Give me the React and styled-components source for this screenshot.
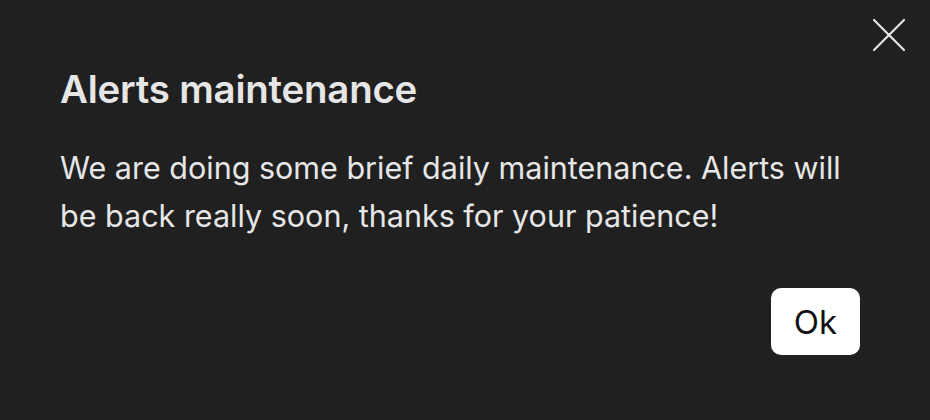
import React from "react";
import styled, { createGlobalStyle } from "styled-components";

const GlobalStyle = createGlobalStyle`
  html, body {
    margin: 0;
    padding: 0;
    background: #202020;
  }
  body {
    font-family: Inter, "Noto Sans", sans-serif;
  }
`;

const Dialog = styled.div`
  position: relative;
  width: 930px;
  height: 420px;
  box-sizing: border-box;
  padding: 65px 61px 0 60px;
  background: #202020;
  color: #e6e6e6;
  display: flex;
  flex-direction: column;
`;

const CloseButton = styled.button`
  position: absolute;
  top: 16px;
  right: 22px;
  width: 38px;
  height: 38px;
  padding: 0;
  border: none;
  background: transparent;
  cursor: pointer;
  display: flex;
  align-items: center;
  justify-content: center;
`;

const Title = styled.h2`
  margin: 0;
  font-size: 38.4px;
  font-weight: 600;
  line-height: 48px;
  letter-spacing: -0.2px;
`;

const Message = styled.p`
  margin: 31px 0 0 0;
  font-size: 30.5px;
  font-weight: 400;
  line-height: 48px;
  max-width: 810px;
`;

const Actions = styled.div`
  display: flex;
  justify-content: flex-end;
  margin-top: 48px;
  padding-right: 9px;
`;

const OkButton = styled.button`
  width: 89px;
  height: 67px;
  border: none;
  border-radius: 10px;
  background: #ffffff;
  color: #111;
  font-family: Inter, "Noto Sans", sans-serif;
  font-size: 33px;
  cursor: pointer;
`;

const App = () => {
  return (
    <>
      <GlobalStyle />
      <Dialog>
        <CloseButton aria-label="Close">
          <svg width="34" height="34" viewBox="0 0 34 34">
            <path
              d="M2 2 L32 32 M32 2 L2 32"
              stroke="#e6e6e6"
              strokeWidth="2.2"
              strokeLinecap="round"
            />
          </svg>
        </CloseButton>
        <Title>Alerts maintenance</Title>
        <Message>
          We are doing some brief daily maintenance. Alerts will be back really
          soon, thanks for your patience!
        </Message>
        <Actions>
          <OkButton>Ok</OkButton>
        </Actions>
      </Dialog>
    </>
  );
};

export default App;
